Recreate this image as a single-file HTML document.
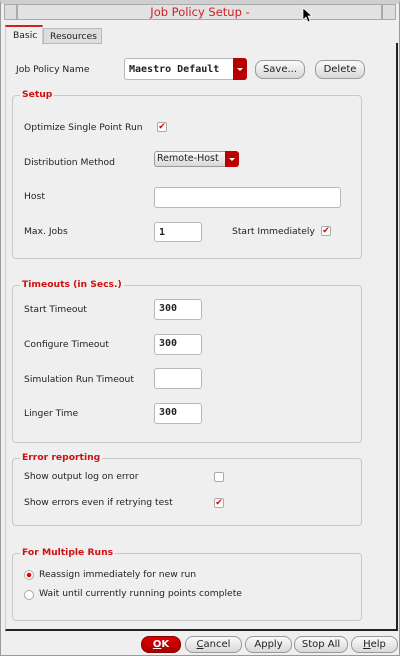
<!DOCTYPE html>
<html><head><style>
*{box-sizing:border-box;margin:0;padding:0}
body{width:400px;height:656px;background:#efefef;font-family:"DejaVu Sans","Liberation Sans",sans-serif;font-size:9.2px;color:#222;position:relative;overflow:hidden}
.a{position:absolute}
.t{position:absolute;line-height:12px;white-space:nowrap}
.grp{position:absolute;border:1px solid #c8c8c8;border-radius:4px;left:12px;width:350px}
.lg{position:absolute;left:20px;color:#d01010;font-weight:bold;background:#efefef;padding:0 2px;line-height:12px}
.inp{position:absolute;background:#fff;border:1px solid #b8b8b8;border-radius:3px;font-family:"DejaVu Sans Mono","Liberation Mono",monospace;font-weight:bold;font-size:10px;padding-left:4px;line-height:18px}
.btn{position:absolute;border:1px solid #9a9a9a;border-radius:8px;background:linear-gradient(#fafafa,#d8d8d8);text-align:center;line-height:17px;font-size:10px}
.cb{position:absolute;width:10px;height:10px;border:1px solid #aaa;background:#fff;border-radius:2px;color:#d00;font-size:9px;line-height:8px;text-align:center;font-weight:bold;overflow:visible}
</style></head><body>
<div class="a" style="left:0;top:0;width:400px;height:656px;border:1px solid #9a9a9a;border-top:4px solid #cfcfcf"></div>
<div class="a" style="left:4px;top:4px;width:13px;height:16px;border:1px solid #aaa;background:#ddd"></div>
<div class="a" style="left:17px;top:4px;width:365px;height:16px;border:1px solid #aaa;background:#e2e2e2"></div>
<div class="a" style="left:382px;top:4px;width:14px;height:16px;border:1px solid #aaa;background:#ddd"></div>
<div class="t" style="left:0;width:400px;text-align:center;top:5px;font-size:11.5px;color:#d02020;line-height:14px">Job Policy Setup -</div>
<svg class="a" style="left:302px;top:7px" width="10" height="16"><path d="M1 1 L1 13 L4 10 L6 15 L8 14 L6 9 L10 9 Z" fill="#000" stroke="#fff" stroke-width="0.7"/></svg>
<!-- panel -->
<div class="a" style="left:5px;top:43px;width:393px;height:588px;border-left:1px solid #ccc;border-right:2px solid #222;border-bottom:2px solid #222"></div>
<div class="a" style="left:5px;top:25px;width:38px;height:20px;border:1px solid #ccc;border-top:2px solid #d02020;border-bottom:none;background:#efefef"></div>
<div class="t" style="left:13px;top:30px">Basic</div>
<div class="a" style="left:43px;top:28px;width:59px;height:16px;border:1px solid #bbb;background:#ddd"></div>
<div class="t" style="left:50px;top:31px">Resources</div>
<div class="t" style="left:16px;top:64px">Job Policy Name</div>
<div class="inp" style="left:124px;top:58px;width:123px;height:22px;line-height:22px">Maestro Default</div>
<div class="a" style="left:233px;top:58px;width:14px;height:22px;background:#b80000;border-radius:0 3px 3px 0"></div>
<div class="a" style="left:237px;top:68px;border-left:3px solid transparent;border-right:3px solid transparent;border-top:3px solid #fff"></div>
<div class="btn" style="left:255px;top:60px;width:50px;height:19px">Save...</div>
<div class="btn" style="left:315px;top:60px;width:50px;height:19px">Delete</div>

<div class="grp" style="top:95px;height:164px"></div><div class="lg" style="top:89px">Setup</div>
<div class="t" style="left:24px;top:122px">Optimize Single Point Run</div>
<div class="cb" style="left:157px;top:122px">✔</div>
<div class="t" style="left:24px;top:157px">Distribution Method</div>
<div class="btn" style="left:154px;top:151px;width:72px;height:16px;border-radius:3px 0 0 3px;line-height:14px;text-align:left;padding-left:2px;font-size:9.5px">Remote-Host</div>
<div class="a" style="left:225px;top:151px;width:14px;height:16px;background:#b80000;border-radius:0 3px 3px 0"></div>
<div class="a" style="left:229px;top:158px;border-left:3px solid transparent;border-right:3px solid transparent;border-top:3px solid #fff"></div>
<div class="t" style="left:24px;top:191px">Host</div>
<div class="inp" style="left:154px;top:187px;width:187px;height:21px"></div>
<div class="t" style="left:24px;top:226px">Max. Jobs</div>
<div class="inp" style="left:154px;top:222px;width:48px;height:20px;line-height:20px">1</div>
<div class="t" style="left:232px;top:226px">Start Immediately</div>
<div class="cb" style="left:321px;top:226px">✔</div>

<div class="grp" style="top:285px;height:158px"></div><div class="lg" style="top:279px">Timeouts (in Secs.)</div>
<div class="t" style="left:24px;top:304px">Start Timeout</div>
<div class="inp" style="left:154px;top:299px;width:48px;height:21px">300</div>
<div class="t" style="left:24px;top:339px">Configure Timeout</div>
<div class="inp" style="left:154px;top:334px;width:48px;height:21px">300</div>
<div class="t" style="left:24px;top:374px">Simulation Run Timeout</div>
<div class="inp" style="left:154px;top:368px;width:48px;height:21px"></div>
<div class="t" style="left:24px;top:408px">Linger Time</div>
<div class="inp" style="left:154px;top:403px;width:48px;height:21px">300</div>

<div class="grp" style="top:458px;height:68px"></div><div class="lg" style="top:452px">Error reporting</div>
<div class="t" style="left:24px;top:471px">Show output log on error</div>
<div class="cb" style="left:214px;top:472px"></div>
<div class="t" style="left:24px;top:497px">Show errors even if retrying test</div>
<div class="cb" style="left:214px;top:498px">✔</div>

<div class="grp" style="top:553px;height:68px"></div><div class="lg" style="top:547px">For Multiple Runs</div>
<div class="a" style="left:24px;top:570px;width:10px;height:10px;border:1px solid #aaa;border-radius:50%;background:radial-gradient(#e00 0 2px,#fff 2.5px)"></div>
<div class="t" style="left:39px;top:569px">Reassign immediately for new run</div>
<div class="a" style="left:24px;top:590px;width:10px;height:10px;border:1px solid #aaa;border-radius:50%;background:#fff"></div>
<div class="t" style="left:39px;top:588px">Wait until currently running points complete</div>

<div class="btn" style="left:141px;top:636px;width:40px;height:17px;background:linear-gradient(#d00,#a00);color:#fff;font-weight:bold;border-color:#800;line-height:15px"><u>O</u>K</div>
<div class="btn" style="left:185px;top:636px;width:57px;height:17px;line-height:15px"><u>C</u>ancel</div>
<div class="btn" style="left:245px;top:636px;width:47px;height:17px;line-height:15px">Apply</div>
<div class="btn" style="left:294px;top:636px;width:54px;height:17px;line-height:15px">Stop All</div>
<div class="btn" style="left:351px;top:636px;width:47px;height:17px;line-height:15px"><u>H</u>elp</div>
</body></html>
